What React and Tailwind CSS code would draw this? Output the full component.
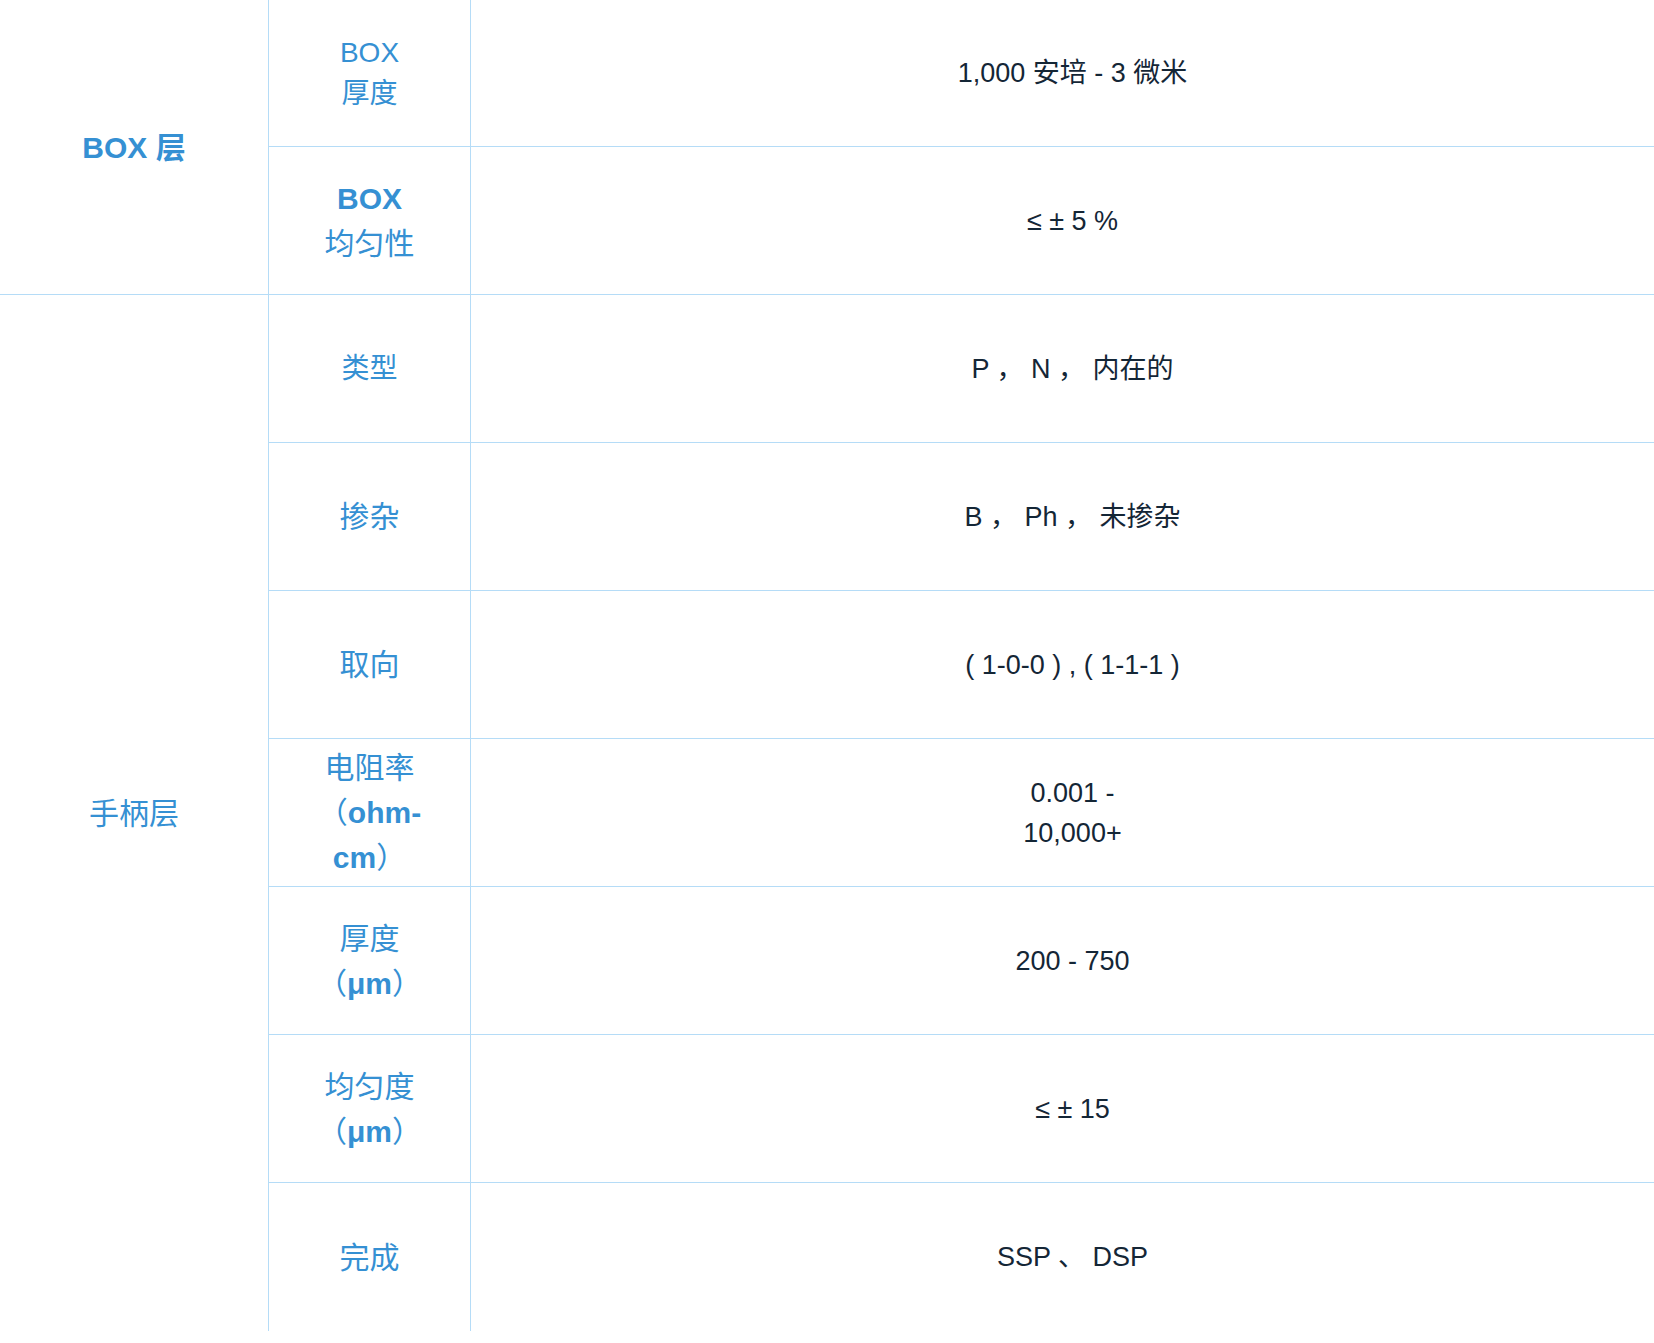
import React from "react";

const font = { fontFamily: '"Liberation Sans", "Noto Sans CJK SC", sans-serif' };

function H({ children, size = "text-[30px]", leading = "leading-[45px]", last }) {
  return (
    <div
      className={`flex items-center justify-center text-center ${size} ${leading} text-[#3590d3] border-r border-[#b5dcf7] ${last ? "" : "border-b"}`}
    >
      <div>{children}</div>
    </div>
  );
}

function V({ children, last }) {
  return (
    <div
      className={`flex items-center justify-center text-center text-[27px] leading-[40px] text-[#142636] border-[#b5dcf7] ${last ? "" : "border-b"}`}
    >
      <div className="whitespace-pre">{children}</div>
    </div>
  );
}

export default function App() {
  return (
    <div className="w-full overflow-hidden bg-white min-h-[1343px]" style={font}>
      <div className="grid w-[1674px] grid-cols-[269px_202px_1203px] grid-rows-[147px_repeat(8,148px)]">
        <div className="row-span-2 flex items-center justify-center border-r border-b border-[#b5dcf7] text-[30px] font-bold text-[#3590d3]">
          BOX 层
        </div>
        <H size="text-[28px]" leading="leading-[41px]">
          BOX
          <br />
          厚度
        </H>
        <V>1,000 安培 - 3 微米</V>
        <H>
          <strong>BOX</strong>
          <br />
          均匀性
        </H>
        <V>≤ ± 5 %</V>

        <div className="row-span-7 flex items-center justify-center border-r border-[#b5dcf7] text-[30px] text-[#3590d3]">
          手柄层
        </div>
        <H size="text-[28px]">类型</H>
        <V>{"P ， N ， 内在的"}</V>
        <H>掺杂</H>
        <V>{"B ， Ph ， 未掺杂"}</V>
        <H>取向</H>
        <V>( 1-0-0 ) , ( 1-1-1 )</V>
        <H leading="leading-[45px]">
          电阻率
          <br />
          （<strong>ohm-</strong>
          <br />
          <strong>cm</strong>）
        </H>
        <V>
          0.001 -
          <br />
          10,000+
        </V>
        <H leading="leading-[45px]">
          厚度
          <br />
          （<strong>μm</strong>）
        </H>
        <V>200 - 750</V>
        <H leading="leading-[45px]">
          均匀度
          <br />
          （<strong>μm</strong>）
        </H>
        <V>≤ ± 15</V>
        <H last>完成</H>
        <V last>SSP 、 DSP</V>
      </div>
    </div>
  );
}
